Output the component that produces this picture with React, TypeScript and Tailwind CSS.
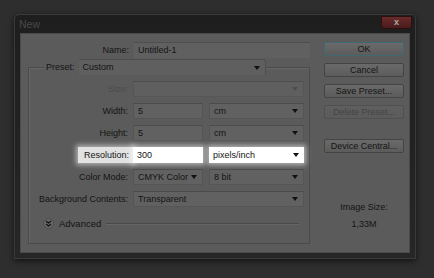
const font = { fontFamily: '"Liberation Sans", Arial, sans-serif' };

const Arrow = ({ dim }: { dim?: boolean }) => (
  <span
    className={`ml-auto mr-[5px] shrink-0 w-0 h-0 border-l-[3px] border-r-[3px] border-t-[4px] border-l-transparent border-r-transparent ${
      dim ? 'border-t-[#4a4a4a]' : 'border-t-[#111]'
    }`}
  />
);

const Field = ({
  value,
  w,
  select,
  dim,
}: {
  value?: string;
  w: string;
  select?: boolean;
  dim?: boolean;
}) => (
  <div
    className={`${w} h-[16px] flex items-center pl-[4px] whitespace-nowrap bg-[#616161] border border-[#555] border-t-[#4c4c4c] ${
      dim ? 'opacity-80' : ''
    }`}
  >
    <span>{value}</span>
    {select && <Arrow dim={dim} />}
  </div>
);

const Row = ({
  label,
  children,
  dim,
}: {
  label: string;
  children: React.ReactNode;
  dim?: boolean;
}) => (
  <div className="flex items-center h-[16px]">
    <div className={`w-[100px] pr-[1px] text-right whitespace-nowrap ${dim ? 'text-[#4b4b4b]' : ''}`}>
      {label}
    </div>
    <div className="ml-[4px] flex gap-[6px]">{children}</div>
  </div>
);

const Btn = ({ label, def, dim }: { label: string; def?: boolean; dim?: boolean }) => (
  <div
    className={`w-[80px] h-[14px] flex items-center justify-center whitespace-nowrap rounded-[2px] bg-gradient-to-b border ${
      def ? 'border-[#3f6a72]' : 'border-[#444]'
    } ${dim ? 'text-[#444] border-[#505050] from-[#5f5f5f] to-[#5b5b5b]' : 'from-[#6a6a6a] to-[#5c5c5c]'}`}
  >
    {label}
  </div>
);

const Glow = 'shadow-[0_0_5px_2px_rgba(255,255,255,0.55)]';

export default function App() {
  return (
    <div
      className="w-[434px] h-[278px] bg-[#2e2e2e] pt-[14px] pl-[14px] text-[9px] text-[#141414] leading-none"
      style={font}
    >
      <div className="w-[402px] h-[245px] flex flex-col bg-gradient-to-b from-[#1e1e1e] to-[#262626] border border-[#3a3a3a] rounded-t-[5px] shadow-[0_2px_6px_rgba(0,0,0,0.6)]">
        <div className="h-[18px] flex items-center pl-[4px] pr-[3px] text-[#484848] text-[10.5px]">
          <span>New</span>
          <div className="ml-auto -mt-[4px] w-[31px] h-[13px] rounded-b-[3px] bg-gradient-to-b from-[#6a2a2a] to-[#4a1c1c] border border-[#2a1010] flex items-center justify-center text-[#a8a8a8] text-[9px] font-bold">
            x
          </div>
        </div>
        <div className="mx-[5px] h-[220px] bg-[#5b5b5b] border border-[#4a4a4a] flex pt-[8px]">
          <div className="w-[290px] flex flex-col">
            <div className="flex items-center h-[16px]">
              <div className="w-[108px] text-right">Name:</div>
              <div className="ml-[5px] w-[176px] h-[16px] flex items-center pl-[4px] bg-[#606060] border-t border-[#4e4e4e]">
                Untitled-1
              </div>
            </div>
            <div className="ml-[7px] w-[282px] mt-[9px] h-[177px] border border-[#4a4a4a] shadow-[inset_1px_1px_0_#666] flex flex-col">
              <div className="-mt-[9px] flex items-center h-[16px]">
                <div className="ml-[15px] px-[2px] bg-[#5b5b5b]">Preset:</div>
                <div className="ml-[2px] w-[187px] h-[16px] flex items-center pl-[4px] bg-[#5f5f5f] border-t border-r border-[#4e4e4e] rounded-tr-[3px]">
                  <span>Custom</span>
                  <Arrow />
                </div>
              </div>
              <div className="mt-[6px] flex flex-col gap-[6px]">
                <Row label="Size:" dim>
                  <Field w="w-[171px]" select dim />
                </Row>
                <Row label="Width:">
                  <Field w="w-[70px]" value="5" />
                  <Field w="w-[95px]" value="cm" select />
                </Row>
                <Row label="Height:">
                  <Field w="w-[70px]" value="5" />
                  <Field w="w-[95px]" value="cm" select />
                </Row>
                <div className="flex items-center h-[16px]">
                  <div className={`ml-[49px] w-[55px] h-[16px] flex items-center justify-end pr-[4px] bg-[#e2e2e2] ${Glow}`}>
                    Resolution:
                  </div>
                  <div className={`w-[70px] h-[16px] flex items-center pl-[4px] bg-white ${Glow}`}>300</div>
                  <div className={`ml-[6px] w-[95px] h-[16px] flex items-center pl-[4px] bg-white ${Glow}`}>
                    <span>pixels/inch</span>
                    <Arrow />
                  </div>
                </div>
                <Row label="Color Mode:">
                  <Field w="w-[70px]" value="CMYK Color" select />
                  <Field w="w-[95px]" value="8 bit" select />
                </Row>
                <Row label="Background Contents:">
                  <Field w="w-[171px]" value="Transparent" select />
                </Row>
              </div>
              <div className="mt-[11px] flex items-center h-[11px]">
                <div className="ml-[14px] w-[11px] h-[11px] rounded-full bg-[#666] border border-[#4e4e4e] flex items-center justify-center">
                  <svg width="7" height="7" viewBox="0 0 7 7" fill="none" stroke="#111" strokeWidth="1.2">
                    <path d="M1 1 L3.5 3 L6 1 M1 4 L3.5 6 L6 4" />
                  </svg>
                </div>
                <span className="ml-[5px] text-[9.5px]">Advanced</span>
                <div className="ml-[5px] w-[193px] h-[2px] border-t border-b border-t-[#4a4a4a] border-b-[#666]" />
              </div>
            </div>
          </div>
          <div className="ml-[13px] w-[80px] flex flex-col">
            <div className="flex flex-col gap-[7px]">
              <Btn label="OK" def />
              <Btn label="Cancel" />
              <Btn label="Save Preset..." />
              <Btn label="Delete Preset..." dim />
            </div>
            <div className="mt-[20px]">
              <Btn label="Device Central..." />
            </div>
            <div className="mt-[50px] text-center">Image Size:</div>
            <div className="mt-[8px] text-center">1,33M</div>
          </div>
        </div>
      </div>
    </div>
  );
}
